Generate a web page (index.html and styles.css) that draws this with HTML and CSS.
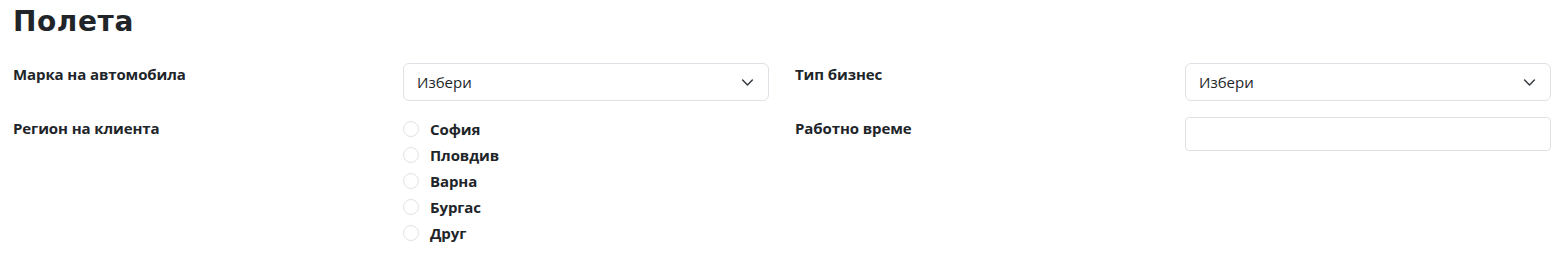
FILE: index.html
```html
<!DOCTYPE html>
<html lang="bg">
<head>
<meta charset="utf-8">
<title>Полета</title>
<link rel="stylesheet" href="styles.css">
</head>
<body>
<div class="page">
  <h2 class="title">Полета</h2>
  <div class="form-grid">
    <div class="label">Марка на автомобила</div>
    <div class="select">
      <span>Избери</span>
      <svg class="chev" viewBox="0 0 16 16" width="16" height="16"><path d="M2 5l6 6 6-6" fill="none" stroke="#343a40" stroke-width="1.8" stroke-linecap="round" stroke-linejoin="round"/></svg>
    </div>
    <div class="label label-right">Тип бизнес</div>
    <div class="select">
      <span>Избери</span>
      <svg class="chev" viewBox="0 0 16 16" width="16" height="16"><path d="M2 5l6 6 6-6" fill="none" stroke="#343a40" stroke-width="1.8" stroke-linecap="round" stroke-linejoin="round"/></svg>
    </div>

    <div class="label">Регион на клиента</div>
    <div class="radios">
      <label class="radio"><span class="circle"></span>София</label>
      <label class="radio"><span class="circle"></span>Пловдив</label>
      <label class="radio"><span class="circle"></span>Варна</label>
      <label class="radio"><span class="circle"></span>Бургас</label>
      <label class="radio"><span class="circle"></span>Друг</label>
    </div>
    <div class="label label-right">Работно време</div>
    <div><div class="input"></div></div>
  </div>
</div>
</body>
</html>
```
FILE: styles.css
```css
* { box-sizing: border-box; }
body {
  margin: 0;
  background: #fff;
  font-family: "Open Sans", "Noto Sans", sans-serif;
  color: #212529;
}
.page {
  padding: 4px 12px 0 13px;
}
.title {
  margin: 0;
  font-family: "DejaVu Sans", Inter, sans-serif;
  font-weight: 700;
  font-size: 28px;
  line-height: 36px;
  letter-spacing: 0.6px;
  color: #212529;
}
.form-grid {
  margin-top: 23px;
  display: grid;
  grid-template-columns: 390px 366px 416px 366px;
  row-gap: 16px;
  align-items: start;
}
.label {
  font-weight: 700;
  font-size: 15px;
  line-height: 22px;
  letter-spacing: -0.1px;
}
.label-right { padding-left: 26px; }
.select {
  height: 38px;
  border: 1px solid #dee2e6;
  border-radius: 6px;
  display: flex;
  align-items: center;
  justify-content: space-between;
  padding: 0 14px 0 13px;
  font-size: 15px;
  color: #212529;
}
.chev { width: 13px; height: 13px; }
.input {
  height: 34px;
  border: 1px solid #dee2e6;
  border-radius: 4px;
}
.radios {
  display: flex;
  flex-direction: column;
  margin-top: -1px;
}
.radio {
  display: flex;
  align-items: center;
  height: 26px;
  font-weight: 700;
  font-size: 15px;
  letter-spacing: -0.1px;
}
.circle {
  width: 16px;
  height: 16px;
  border: 1px solid #dee2e6;
  border-radius: 50%;
  margin-right: 11px;
  flex: none;
}
```
